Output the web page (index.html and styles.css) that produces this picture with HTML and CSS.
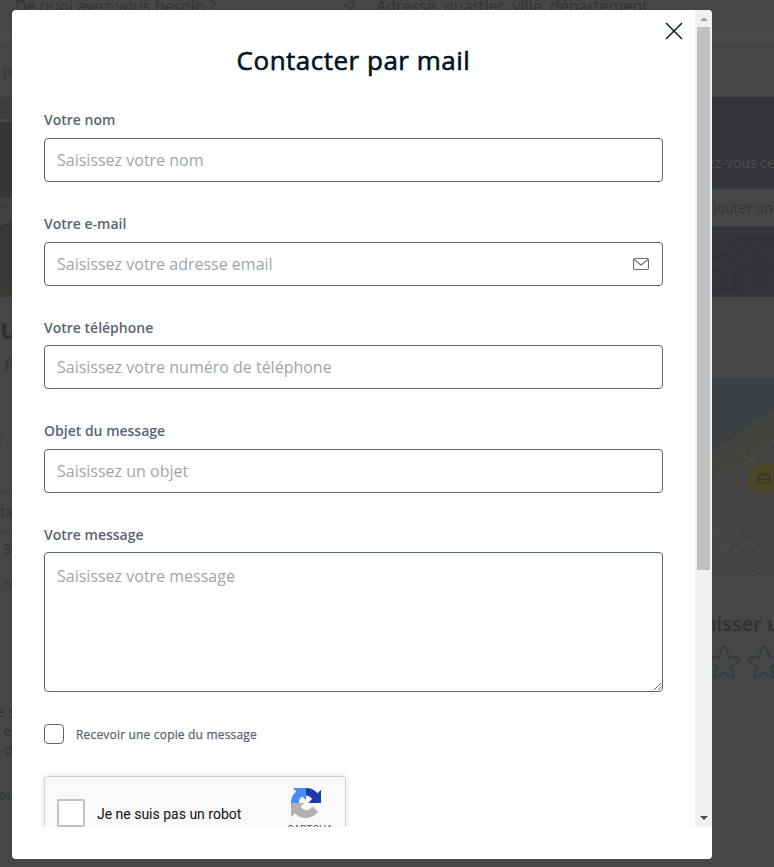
FILE: index.html
```html
<!DOCTYPE html>
<html lang="fr">
<head>
<meta charset="utf-8">
<title>Contacter par mail</title>
<link rel="stylesheet" href="styles.css">
</head>
<body>
<div class="page">
  <header class="search">
    <span class="what">De quoi avez-vous besoin ?</span>
    <svg class="plane" viewBox="0 0 14 14"><path d="M1 6 L12.5 .5 L8 12 L6.5 7.5Z"/></svg>
    <span class="where">Adresse, quartier, ville, département</span>
  </header>
  <nav class="crumbs">p</nav>
  <div class="columns">
    <div class="left">
      <svg class="photo" viewBox="0 0 12 200" preserveAspectRatio="none">
        <rect width="12" height="200" fill="#393735"/>
        <rect width="12" height="22" fill="#403d3d"/><rect y="22" width="12" height="3" fill="#484747"/>
        <path d="M4.500 25V101M8.500 25V101" stroke="#32312f"/><path d="M0 101H12V122L0 130Z" fill="#434241"/>
        <path d="M0 109H12M0 130L12 127" stroke="#363433"/><path d="M0 191L12 187V200H0Z" fill="#3c3a37"/>
      </svg>
      <div class="name">u</div>
      <div class="place">p</div>
      <div class="tab">s</div>
      <div class="contact">ta</div>
      <div class="phone">30</div>
      <div class="mail">.fr</div>
      <div class="desc"><div>e s</div><div>l'e</div><div class="d">d</div></div>
      <div class="more">ou</div>
    </div>
    <div class="right">
      <section class="banner">
        <p>ez-vous ce</p>
        <div class="add">jouter un</div>
        <svg viewBox="0 0 62 70"><g fill="none" stroke="#303237" stroke-width="2"><path d="M2 31L12 27L27 36M0 43H12V64H0M22 12H62V18H24ZM29 20V68M42 20V62M15 48q4-7 8 0v12q-4 6-8 0ZM50 24V66M32 42H62"/></g></svg>
      </section>
      <svg class="map" viewBox="0 0 62 200">
        <rect width="62" height="200" fill="#444343"/>
        <path d="M0 0H62V34L30 57L0 76Z" fill="#3d4144"/>
        <path d="M0 76L30 57L62 34V62L35 84L18 91L0 109Z" fill="#41433d"/>
        <path d="M0 76L30 57L62 34" fill="none" stroke="#474441" stroke-width="3"/>
        <g fill="none" stroke="#484848" stroke-width="2.5"><path d="M0 80L12 92L35 84L62 62M28 72L40 84L62 94M12 92L0 107M0 153H27L12 173L0 155L31 195L36 200L62 182M18 176L36 163L50 176"/></g>
        <circle cx="13" cy="94" r="5" fill="#424242" stroke="#474747" stroke-width="2"/>
        <circle cx="52" cy="100" r="16" fill="#4a4728"/>
        <g fill="none" stroke="#303028" stroke-width="1.1"><rect x="46.500" y="97" width="11" height="8" rx="1.500"/><path d="M50 97V95H54V97M46.500 101H57.500"/></g>
      </svg>
      <div class="review">aisser u</div>
      <svg class="stars" viewBox="0 0 64 36"><defs><path id="star" d="M0-15Q1-16 2-14L5-5L14-4Q17-3 15-1L7 5L10 14Q10 16 7 15L0 10L-7 15Q-10 16-10 14L-7 5L-15-1Q-17-3-14-4L-5-5L-2-14Q-1-16 0-15Z" fill="none" stroke="#2f3b3f" stroke-width="1.8"/></defs><use href="#star" x="14" y="18"/><use href="#star" x="54" y="18"/></svg>
    </div>
  </div>
</div>

<div class="modal">
  <div class="view">
    <form class="form">
      <svg class="close" viewBox="0 0 18 18"><path d="M1 1L17 17M17 1L1 17"/></svg>
      <h1>Contacter par mail</h1>
      <div class="field"><label for="nom">Votre nom</label><input id="nom" placeholder="Saisissez votre nom"></div>
      <div class="field"><label for="email">Votre e-mail</label>
        <div class="box"><input id="email" placeholder="Saisissez votre adresse email">
        <svg class="env" viewBox="0 0 16 12"><rect x=".5" y=".5" width="15" height="11" rx="1.5"/><path d="M1 1.5L8 7L15 1.5"/></svg></div></div>
      <div class="field"><label for="tel">Votre téléphone</label><input id="tel" placeholder="Saisissez votre numéro de téléphone"></div>
      <div class="field"><label for="objet">Objet du message</label><input id="objet" placeholder="Saisissez un objet"></div>
      <div class="field"><label for="msg">Votre message</label><textarea id="msg" placeholder="Saisissez votre message"></textarea></div>
      <div class="copy"><span class="check"></span><span class="copy-text">Recevoir une copie du message</span></div>
      <div class="captcha">
        <span class="robot"></span><span class="robot-text">Je ne suis pas un robot</span>
        <div class="brand">
          <svg viewBox="0 0 32 32">
            <path d="M16 1A15 15 0 0 1 27.5 6.2L31 2.8V16H18.5L22 12Q20 8.8 16 8.6Z" fill="#1c3aa9"/>
            <path d="M1 16A15 15 0 0 1 6.2 4.5L3 1H16V13L12.2 9.5Q9 11.5 8.8 16Z" fill="#4a8af4"/>
            <path d="M1 16H14L10.5 20Q13.5 24 18 23Q20.5 22.5 22.5 19.5L28 24.5A15 15 0 0 1 5 26.5L1 30Z" fill="#b1b1b1"/>
          </svg>
          <span>CAPTCHA</span>
        </div>
      </div>
    </form>
    <div class="scrollbar"><i class="up"></i><i class="thumb"></i><i class="down"></i></div>
  </div>
</div>
</body>
</html>
```
FILE: styles.css
```css
* { box-sizing: border-box; }
body { margin: 0; width: 774px; height: 867px; overflow: hidden; background: #464646; font-family: "Open Sans", sans-serif; color: #303133; }
.page { height: 867px; overflow: hidden; }
.search { height: 46px; display: flex; border-bottom: 1px solid #414141; background: linear-gradient(#464646 28px, #434343 28px, #434343 29px, #484848 29px); font-size: 16px; line-height: 22px; color: #323335; padding-left: 15px; }
.search span { position: relative; top: -5px; white-space: nowrap; }
.what { width: 328px; }
.plane { width: 13px; height: 13px; margin-right: 20px; fill: none; stroke: #303133; }
.crumbs { height: 51px; padding: 15px 0 0 3px; font-size: 14px; line-height: 20px; }
.columns { display: flex; justify-content: space-between; }
.left { width: 12px; font-size: 14px; line-height: 20px; white-space: nowrap; overflow: hidden; }
.photo { display: block; width: 12px; height: 200px; }
.name { font-size: 28px; font-weight: 700; line-height: 40px; height: 55px; padding-top: 11px; }
.place { padding-left: 5px; height: 76px; }
.tab { margin-left: -5px; height: 63px; }
.contact { height: 41px; border: solid #2d3c3f; border-width: 1px 0; line-height: 39px; }
.phone { height: 36px; padding: 7px 0 0 3px; }
.mail { padding-top: 7px; height: 134px; color: #303a3c; }
.desc { height: 83px; line-height: 19px; }
.desc div { margin-left: -3px; }
.desc .d { margin-left: 4px; }
.more { color: #303a3c; font-weight: 600; margin-left: -2px; }
.right { width: 62px; white-space: nowrap; overflow: hidden; }
.banner { height: 200px; background: #323439; font-size: 14px; }
.banner p { margin: 0 0 0 -5px; height: 91px; padding-top: 56px; line-height: 20px; color: #4d4e50; }
.add { height: 39px; border: solid #2d3c3f; border-width: 1px 0; background: #464646; line-height: 37px; padding-left: 1px; }
.banner svg { display: block; width: 62px; height: 70px; }
.map { display: block; width: 62px; height: 200px; margin-top: 81px; }
.review { margin: 32px 0 0 -7px; font-size: 20px; line-height: 28px; font-weight: 600; }
.stars { display: block; width: 64px; height: 36px; margin: 6px 0 0 -2px; }

.modal { position: absolute; left: 12px; top: 10px; width: 700px; height: 849px; background: #fff; border-radius: 4px; overflow: hidden; }
.view { height: 817px; display: flex; overflow: hidden; }
.form { position: relative; width: 683px; padding: 32px; height: 817px; overflow: hidden; }
.close { position: absolute; right: 12px; top: 12px; width: 18px; height: 18px; fill: none; stroke: #0e1c26; stroke-width: 1.5; }
h1 { margin: 0; height: 68px; text-align: center; font-size: 26px; font-weight: 400; line-height: 36px; letter-spacing: .5px; color: #03121c; -webkit-text-stroke: .6px #03121c; }
.field { margin-bottom: 31.6px; }
label { display: block; height: 28px; padding-top: .4px; line-height: 19px; font-size: 14px; font-weight: 600; color: #5a6472; }
input, textarea { display: block; width: 100%; height: 44px; margin: 0; border: 1px solid #5a6472; border-radius: 4px; padding: 0 12px; font: 16px/22px "Open Sans", sans-serif; background: #fff; outline: 0; }
textarea { height: 140px; padding-top: 12px; resize: vertical; }
::placeholder { color: #a0a5ac; opacity: 1; }
.box { position: relative; }
.env { position: absolute; right: 14px; top: 16px; width: 16px; height: 12px; fill: none; stroke: #686f82; stroke-width: 1.1; }
.copy { display: flex; align-items: center; gap: 12px; height: 20px; font-size: 12px; color: #5a6472; }
.copy-text { padding-top: 2px; letter-spacing: .18px; -webkit-text-stroke: .25px #5a6472; }
.check { width: 20px; height: 20px; border: 1px solid #5a6472; border-radius: 4px; }
.captcha { display: flex; width: 302px; height: 76px; margin-top: 32px; padding: 0 12px; border: 1px solid #d3d3d3; border-radius: 3px; background: #f9f9f9; box-shadow: 0 0 4px 1px rgba(0,0,0,.08); }
.robot { width: 28px; height: 28px; margin-top: 22px; border: 2px solid #c1c1c1; border-radius: 2px; background: #fff; }
.robot-text { margin: 28px 0 0 12px; width: 177px; font: 14px/18px Roboto, sans-serif; color: #111; }
.brand { width: 60px; padding-top: 10px; font: 10px/12px Roboto, sans-serif; color: #555; }
.brand svg { display: block; width: 32px; height: 32px; margin: 0 0 5px 17px; }
.brand span { display: block; margin-left: 14px; }
.scrollbar { width: 17px; background: #f1f1f1; display: flex; flex-direction: column; align-items: center; }
.up { margin: 7px 0 6px; border: solid transparent; border-width: 0 4px 4px; border-bottom-color: #a3a3a3; }
.thumb { width: 13px; height: 543px; background: #c1c1c1; }
.down { margin-top: auto; margin-bottom: 7px; border: solid transparent; border-width: 4px 4px 0; border-top-color: #505050; }
```
